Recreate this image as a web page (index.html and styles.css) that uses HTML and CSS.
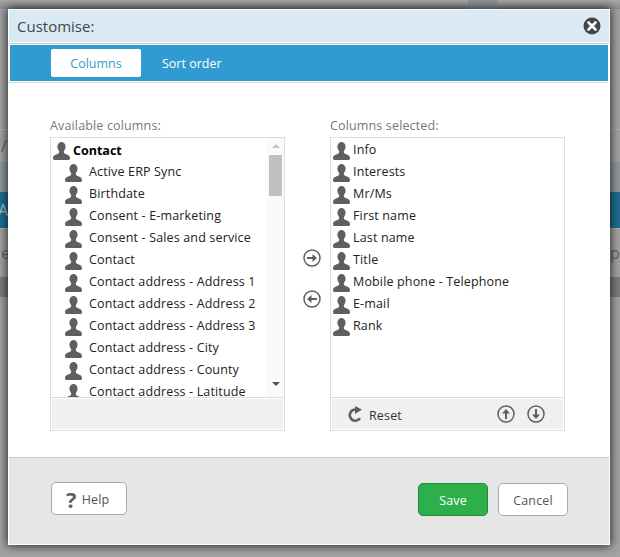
FILE: index.html
```html
<!DOCTYPE html>
<html lang="en">
<head>
    <meta charset="UTF-8">
    <meta name="viewport" content="width=device-width, initial-scale=1.0">
    <title>Customise</title>
    <link rel="stylesheet" href="styles.css">
</head>
<body>
    <svg class="defs" width="0" height="0">
        <symbol id="person" viewBox="0 0 17 18">
            <ellipse cx="8.5" cy="4.8" rx="4.1" ry="4.8"/>
            <path d="M6.3 8.5h4.4l.3 2.3c.5 1 2.6 1.400 4 2.200 1.300.7 2 1.700 2 3.200 0 1.200-.6 1.800-1.800 1.800H1.800C.6 18 0 17.400 0 16.200c0-1.500.7-2.500 2-3.200 1.400-.8 3.500-1.200 4-2.200z"/>
        </symbol>
        <symbol id="arrow-right" viewBox="0 0 18 18">
            <circle cx="9" cy="9" r="8" fill="none" stroke="currentColor" stroke-width="1.500"/>
            <path d="M4 8h5.500V5l4.500 4-4.500 4v-3H4z"/>
        </symbol>
    </svg>

    <div class="backdrop">
        <div class="bg-row bg-top"><span class="bg-chip"></span></div>
        <div class="bg-row bg-upper"></div>
        <div class="bg-row bg-crumb"><span>/</span></div>
        <div class="bg-row bg-slate"></div>
        <div class="bg-row bg-blue"><span>Ac</span></div>
        <div class="bg-row bg-cell"><span>e</span><span>ep</span></div>
        <div class="bg-row bg-dark"></div>
        <div class="bg-row bg-lower"></div>
    </div>

    <div class="modal">
        <div class="modal-head">
            <span class="modal-title">Customise:</span>
            <svg class="close" width="18" height="18" viewBox="0 0 18 18">
                <circle cx="9" cy="9" r="8.500" fill="#444"/>
                <path d="M5.500 5.500l7 7M12.500 5.500l-7 7" stroke="#fff" stroke-width="2.600" stroke-linecap="round"/>
            </svg>
        </div>

        <div class="tabs-wrap">
            <div class="tabs">
                <div class="tab active">Columns</div>
                <div class="tab">Sort order</div>
            </div>
        </div>

        <div class="modal-body">
            <div class="column">
                <div class="column-label">Available columns:</div>
                <div class="list-box">
                    <div class="list-view">
                        <div class="rows">
                            <div class="row parent"><svg class="person"><use href="#person"/></svg>Contact</div>
                            <div class="row nested"><svg class="person"><use href="#person"/></svg>Active ERP Sync</div>
                            <div class="row nested"><svg class="person"><use href="#person"/></svg>Birthdate</div>
                            <div class="row nested"><svg class="person"><use href="#person"/></svg>Consent - E-marketing</div>
                            <div class="row nested"><svg class="person"><use href="#person"/></svg>Consent - Sales and service</div>
                            <div class="row nested"><svg class="person"><use href="#person"/></svg>Contact</div>
                            <div class="row nested"><svg class="person"><use href="#person"/></svg>Contact address - Address 1</div>
                            <div class="row nested"><svg class="person"><use href="#person"/></svg>Contact address - Address 2</div>
                            <div class="row nested"><svg class="person"><use href="#person"/></svg>Contact address - Address 3</div>
                            <div class="row nested"><svg class="person"><use href="#person"/></svg>Contact address - City</div>
                            <div class="row nested"><svg class="person"><use href="#person"/></svg>Contact address - County</div>
                            <div class="row nested"><svg class="person"><use href="#person"/></svg>Contact address - Latitude</div>
                        </div>
                        <div class="scrollbar">
                            <span class="arrow-up"></span>
                            <span class="thumb"></span>
                            <span class="arrow-down"></span>
                        </div>
                    </div>
                    <div class="list-foot"></div>
                </div>
            </div>

            <div class="move-buttons">
                <svg class="round-icon"><use href="#arrow-right"/></svg>
                <svg class="round-icon flip-x"><use href="#arrow-right"/></svg>
            </div>

            <div class="column">
                <div class="column-label">Columns selected:</div>
                <div class="list-box">
                    <div class="list-view">
                        <div class="rows">
                            <div class="row"><svg class="person"><use href="#person"/></svg>Info</div>
                            <div class="row"><svg class="person"><use href="#person"/></svg>Interests</div>
                            <div class="row"><svg class="person"><use href="#person"/></svg>Mr/Ms</div>
                            <div class="row"><svg class="person"><use href="#person"/></svg>First name</div>
                            <div class="row"><svg class="person"><use href="#person"/></svg>Last name</div>
                            <div class="row"><svg class="person"><use href="#person"/></svg>Title</div>
                            <div class="row"><svg class="person"><use href="#person"/></svg>Mobile phone - Telephone</div>
                            <div class="row"><svg class="person"><use href="#person"/></svg>E-mail</div>
                            <div class="row"><svg class="person"><use href="#person"/></svg>Rank</div>
                        </div>
                    </div>
                    <div class="list-foot selected-foot">
                        <svg class="reset-icon" width="16" height="17" viewBox="0 0 16 17">
                            <path d="M13 12.300A5.600 5.600 0 1 1 8.500 3.500" fill="none" stroke="#5f5f5f" stroke-width="2.600"/>
                            <path d="M8 0l7 3.600L8 8z" fill="#5f5f5f"/>
                        </svg>
                        <span class="reset-label">Reset</span>
                        <svg class="round-icon rotate-up"><use href="#arrow-right"/></svg>
                        <svg class="round-icon rotate-down"><use href="#arrow-right"/></svg>
                    </div>
                </div>
            </div>
        </div>

        <div class="modal-foot">
            <button type="button" class="btn btn-help"><span class="help-mark">?</span>Help</button>
            <div class="foot-right">
                <button type="button" class="btn btn-save">Save</button>
                <button type="button" class="btn btn-cancel">Cancel</button>
            </div>
        </div>
    </div>
</body>
</html>
```

FILE: styles.css
```css
html, body {
    height: 100%;
}
body {
    margin: 0;
    overflow: hidden;
    background-color: #a3a3a3;
    font-family: "Open Sans", "Liberation Sans", sans-serif;
    font-size: 12.5px;
    letter-spacing: 0.15px;
    color: #222;
}
.defs {
    display: block;
    height: 0;
}

/* dimmed page behind the dialog */
.backdrop {
    height: 557px;
    display: flex;
    flex-direction: column;
    color: #666;
    font-size: 16px;
}
.bg-row {
    display: flex;
    justify-content: space-between;
    align-items: center;
    overflow: hidden;
}
.bg-top {
    height: 9px;
    background: linear-gradient(#a8a8a8, #8a8a8a);
    padding-left: 468px;
    justify-content: flex-start;
    align-items: stretch;
}
.bg-chip {
    width: 30px;
    background-color: #8b9599;
}
.bg-upper {
    height: 120px;
}
.bg-lower {
    flex: 1;
}
.bg-crumb {
    height: 32px;
    border-top: 1px solid #b4b4b4;
}
.bg-crumb span {
    margin-left: 1px;
    color: #6b5f4a;
}
.bg-slate {
    height: 30px;
    background-color: #8f989c;
}
.bg-blue {
    height: 36px;
    background-color: #1d6d94;
    border-bottom: 1px solid #b4b4b4;
}
.bg-blue span {
    margin-left: -2px;
    color: #a9c4d2;
}
.bg-cell {
    height: 48px;
}
.bg-cell span {
    margin-left: 1px;
}
.bg-dark {
    height: 20px;
    background-color: #7d7d7d;
}

.modal {
    position: absolute;
    top: 9px;
    left: 8px;
    width: 600px;
    height: 534px;
    display: flex;
    flex-direction: column;
    background-color: #fff;
    border: 1px solid #fff;
    box-shadow: 0 0 9px 1px rgba(0,0,0,0.75);
}
.modal-head {
    height: 32px;
    flex: none;
    margin-bottom: 1px;
    padding: 0 8px;
    display: flex;
    justify-content: space-between;
    align-items: center;
    background-color: #d9eaf4;
}
.modal-title {
    font-size: 15px;
    letter-spacing: 0;
    color: #444;
}
.tabs-wrap {
    flex: none;
    padding: 1px;
    border-top: 1px solid #ccc;
    border-bottom: 1px solid #ddd;
}
.tabs {
    height: 36px;
    padding-left: 41px;
    display: flex;
    align-items: center;
    background-color: #2f9bd0;
}
.tab {
    height: 28px;
    line-height: 30px;
    padding: 0 21px;
    font-size: 12.5px;
    font-weight: 500;
    letter-spacing: 0;
    color: #fff;
}
.tab.active {
    width: 90px;
    padding: 0;
    box-sizing: border-box;
    text-align: center;
    font-weight: 400;
    color: #2f9bd0;
    background-color: #fff;
    border-radius: 2px;
}

.modal-body {
    flex: 1;
    display: flex;
    padding: 34px 0 0 41px;
}
.column {
    width: 235px;
}
.column-label {
    height: 20px;
    line-height: 18px;
    color: #777;
}
.list-box {
    height: 292px;
    display: flex;
    flex-direction: column;
    border: 1px solid #ddd;
}
.list-view {
    height: 259px;
    flex: none;
    display: flex;
    overflow: hidden;
}
.rows {
    flex: 1;
}
.row {
    height: 22px;
    padding-left: 2px;
    display: flex;
    align-items: center;
    white-space: nowrap;
    color: #222;
}
.row.parent {
    height: 20px;
    padding-top: 2px;
    font-weight: 700;
    letter-spacing: 0;
    color: #000;
}
.row.nested {
    padding-left: 14px;
}
.person {
    width: 17px;
    height: 18px;
    flex: none;
    margin: 3px 3px 0 0;
    fill: #5f5f5f;
}
.parent .person {
    margin-top: 1px;
}
.nested .person {
    margin-right: 7px;
}

.scrollbar {
    width: 17px;
    flex: none;
    display: flex;
    flex-direction: column;
    align-items: center;
    background-color: #fafafa;
}
.arrow-up, .arrow-down {
    width: 0;
    height: 0;
    border-left: 4px solid transparent;
    border-right: 4px solid transparent;
}
.arrow-up {
    margin-top: 6px;
    border-bottom: 4px solid #c4c4c4;
}
.arrow-down {
    margin-top: 186px;
    border-top: 4px solid #505050;
}
.thumb {
    width: 13px;
    height: 41px;
    margin-top: 7px;
    background-color: #c1c1c1;
}

.list-foot {
    flex: 1;
    border-top: 1px solid #ddd;
    background-color: #f0f0f0;
    box-shadow: inset 0 0 0 1px #fff;
}
.selected-foot {
    display: flex;
    align-items: center;
    padding: 0 19px 0 16px;
}
.reset-icon {
    flex: none;
    margin-right: 6px;
}
.reset-label {
    flex: 1;
    padding-top: 2px;
    color: #333;
}
.round-icon {
    width: 18px;
    height: 18px;
    flex: none;
    color: #5f5f5f;
    fill: #5f5f5f;
}
.flip-x {
    transform: scaleX(-1);
}
.rotate-up {
    transform: rotate(-90deg);
    margin-right: 12px;
}
.rotate-down {
    transform: rotate(90deg);
}
.move-buttons {
    width: 45px;
    box-sizing: border-box;
    padding: 132px 0 0 9px;
    display: flex;
    flex-direction: column;
    align-items: center;
    gap: 23px;
}

.modal-foot {
    height: 62px;
    flex: none;
    padding: 24px 41px 0 42px;
    display: flex;
    justify-content: space-between;
    align-items: flex-start;
    border-top: 1px solid #ccc;
    background-color: #e6e6e6;
}
.foot-right {
    display: flex;
    gap: 10px;
    margin-top: 1px;
}
.btn {
    height: 33px;
    padding: 2px 0 0;
    font-family: inherit;
    font-size: 12.5px;
    letter-spacing: 0.15px;
    border: 1px solid #aaa;
    border-radius: 5px;
    background-color: #fff;
    color: #555;
    box-sizing: border-box;
}
.btn-help {
    width: 76px;
    display: flex;
    align-items: center;
    padding-left: 14px;
}
.help-mark {
    margin: -2px 5px 0 0;
    font-size: 22px;
    font-weight: 700;
    line-height: 22px;
    color: #5f5f5f;
}
.btn-save {
    width: 70px;
    background-color: #2db04b;
    border-color: #1d8a36;
    color: #fff;
}
.btn-cancel {
    width: 70px;
}
```
